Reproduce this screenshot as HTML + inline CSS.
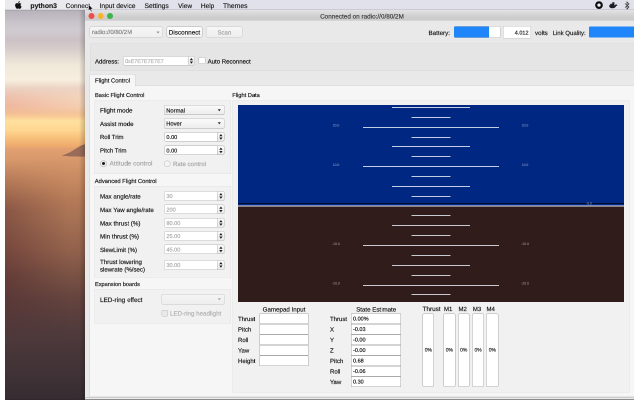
<!DOCTYPE html>
<html><head><meta charset="utf-8"><title>cfclient</title>
<style>
html,body{margin:0;padding:0;background:#fff;}
body{width:640px;height:400px;overflow:hidden;position:relative;font-family:"Liberation Sans", sans-serif;}
#s{position:absolute;left:0;top:0;width:1280px;height:800px;overflow:hidden;background:#fff;
transform:scale(0.5);transform-origin:0 0;will-change:transform;text-rendering:geometricPrecision;}
#s div,#s span,#s svg{position:absolute;box-sizing:border-box;display:block;white-space:nowrap;}
</style></head><body><div id="s">
<div style="left:10px;top:0px;width:1258px;height:800px;background:linear-gradient(to bottom,rgb(182,177,186) 0px,rgb(182,177,186) 20px,rgb(200,195,202) 44px,rgb(208,203,208) 60px,rgb(204,194,198) 80px,rgb(212,203,202) 96px,rgb(226,218,210) 112px,rgb(240,232,218) 130px,rgb(247,238,222) 160px,rgb(236,212,196) 176px,rgb(238,205,185) 190px,rgb(240,194,166) 210px,rgb(243,192,150) 226px,rgb(250,206,150) 234px,rgb(255,224,158) 242px,rgb(254,215,145) 260px,rgb(248,192,122) 276px,rgb(238,170,108) 292px,rgb(226,160,113) 298px,rgb(210,148,104) 330px,rgb(190,130,92) 380px,rgb(180,122,88) 400px,rgb(162,110,82) 450px,rgb(146,97,76) 500px,rgb(122,82,68) 550px,rgb(99,67,62) 600px,rgb(84,60,60) 650px,rgb(72,54,57) 700px,rgb(63,50,54) 750px,rgb(54,44,49) 796px,rgb(48,40,46) 800px);"></div>
<div style="left:10px;top:320px;width:160px;height:360px;background:linear-gradient(to right,rgba(45,5,25,0.27),rgba(45,5,25,0) 78%);-webkit-mask-image:linear-gradient(to bottom,transparent,#000 28%,#000 65%,transparent);mask-image:linear-gradient(to bottom,transparent,#000 28%,#000 65%,transparent);"></div>
<div style="left:10px;top:172px;width:160px;height:60px;background:linear-gradient(to right,rgba(236,150,140,0.22),rgba(255,240,210,0.30));-webkit-mask-image:linear-gradient(to bottom,transparent,#000 40%,#000 70%,transparent);mask-image:linear-gradient(to bottom,transparent,#000 40%,#000 70%,transparent);"></div>
<svg style="left:110px;top:276px;width:64px;height:48px" viewBox="0 0 32 24"><path d="M6.500 17.600 Q14 15.500 21 10.500 Q26 7 31 6 L31 18.500 Q18 19 6.500 17.600Z" fill="rgb(152,108,88)"/></svg>
<div style="left:158px;top:20px;width:12px;height:780px;background:linear-gradient(to right,rgba(0,0,0,0),rgba(0,0,0,0.2));"></div>
<div style="left:10px;top:0px;width:1258px;height:20px;background:linear-gradient(to right,#ebebee 0px,#e9e9ee 190px,#e1e1ec 300px);"></div>
<div style="left:10px;top:19.2px;width:160px;height:1.6px;background:rgba(120,120,130,0.35);"></div>
<svg style="left:30px;top:2px;width:14px;height:16px" viewBox="0 0 14 16"><path d="M9.6 0.2c0.1 1-0.3 1.9-0.9 2.6C8.1 3.500 7.200 4 6.300 3.900 6.200 3 6.600 2 7.200 1.400 7.800 0.700 8.800 0.200 9.600 0.200zM12.800 5.500c-1 0.600-1.600 1.500-1.600 2.700 0 1.400 0.800 2.500 2 3-0.300 1-0.800 1.900-1.400 2.700-0.700 0.900-1.300 1.800-2.400 1.800-1 0-1.300-0.600-2.500-0.600s-1.600 0.600-2.500 0.600c-1 0-1.700-0.900-2.400-1.900C0.700 11.900 0 9.500 0.300 7.600c0.300-1.900 1.800-3.300 3.500-3.300 1 0 1.900 0.700 2.500 0.700 0.600 0 1.700-0.800 2.900-0.700 1.400 0.100 2.600 0.600 3.600 1.200z" fill="#111"/></svg>
<span style="left:60.8px;top:1.66px;font-size:13.68px;line-height:20px;-webkit-text-stroke:0.32px #1c1c1c;color:#1c1c1c;font-weight:bold;">python3</span>
<span style="left:131.2px;top:1.68px;font-size:13.1px;line-height:20px;-webkit-text-stroke:0.32px #1c1c1c;color:#1c1c1c;">Connect</span>
<span style="left:199px;top:1.66px;font-size:13.36px;line-height:20px;-webkit-text-stroke:0.32px #1c1c1c;color:#1c1c1c;">Input device</span>
<span style="left:289px;top:1.66px;font-size:13.42px;line-height:20px;-webkit-text-stroke:0.32px #1c1c1c;color:#1c1c1c;">Settings</span>
<span style="left:356.2px;top:1.68px;font-size:12.94px;line-height:20px;-webkit-text-stroke:0.32px #1c1c1c;color:#1c1c1c;">View</span>
<span style="left:401.8px;top:1.68px;font-size:13.04px;line-height:20px;-webkit-text-stroke:0.32px #1c1c1c;color:#1c1c1c;">Help</span>
<span style="left:446px;top:1.66px;font-size:13.56px;line-height:20px;-webkit-text-stroke:0.32px #1c1c1c;color:#1c1c1c;">Themes</span>
<svg style="left:1188px;top:1.2px;width:20px;height:18px" viewBox="0 0 10 9"><circle cx="5" cy="4.6" r="2.75" fill="#f4f4f8" stroke="#0c0c10" stroke-width="2.2"/></svg>
<svg style="left:1216px;top:2px;width:22px;height:18px" viewBox="0 0 11 9"><path d="M1 4.200 H7.300 Q7.600 2.900 8.300 3 Q8.600 3.500 8.500 4 Q9.200 3.800 9.500 4.100 Q9 5 8.200 5 Q7.200 7.300 4.200 7.300 Q1.300 7.300 1 4.200Z M2.200 2.700h4.200v1.600H2.200z M4.300 1.300h2.100v1.500H4.300z" fill="#1c1c22"/></svg>
<svg style="left:1246px;top:2px;width:16px;height:18px" viewBox="0 0 8 9"><path d="M2 2.500 L6 6 L4 8 V1 L6 3 L2 6.500" fill="none" stroke="#333" stroke-width="0.7"/></svg>
<div style="left:170px;top:21px;width:1098px;height:779px;background:#e9e9e9;"></div>
<div style="left:170px;top:19.2px;width:1098px;height:1.8px;background:#b2b2be;"></div>
<div style="left:170px;top:20.4px;width:1098px;height:20.4px;background:linear-gradient(#e3e3e5,#d0d0d0 60%,#cbcbcb);border-bottom:1px solid #c0c0c0;"></div>
<div style="left:177.4px;top:26px;width:11.6px;height:11.6px;background:#ee4d48;border-radius:50%;"></div>
<div style="left:195.8px;top:26px;width:11.6px;height:11.6px;background:#f6b42d;border-radius:50%;"></div>
<div style="left:214.2px;top:26px;width:11.6px;height:11.6px;background:#3bb54a;border-radius:50%;"></div>
<span style="left:640.2px;top:23.3px;font-size:12.72px;line-height:20px;-webkit-text-stroke:0.32px #3a3a3a;color:#3a3a3a;">Connected on radio://0/80/2M</span>
<svg style="left:176px;top:8px;width:12px;height:18px" viewBox="0 0 6 9"><path d="M0.500 0.300 L0.500 6.800 L2 5.400 L3 7.800 L4 7.400 L3 5 L5 5 Z" fill="#111" stroke="#fff" stroke-width="0.4"/></svg>
<div style="left:179px;top:53px;width:146.8px;height:22.2px;background:linear-gradient(#f6f6f6,#efefef);border:1.4px solid #c4c4c4;border-radius:3.6px;"></div>
<span style="left:184px;top:54.12px;font-size:12px;line-height:20px;-webkit-text-stroke:0.32px #7e7e7e;color:#7e7e7e;">radio://0/80/2M</span>
<svg style="left:312px;top:62px;width:8px;height:6px" viewBox="0 0 4 3"><path d="M0.300 0.500 L3.700 0.500 L2 2.600Z" fill="#999"/></svg>
<div style="left:332.6px;top:52.8px;width:72.2px;height:22.6px;background:linear-gradient(#ffffff,#f4f4f4);border:1.4px solid #adadad;border-radius:3.6px;"></div>
<span style="left:337.6px;top:55.3px;font-size:12.7px;line-height:20px;-webkit-text-stroke:0.32px #111;color:#111;">Disconnect</span>
<div style="left:412.4px;top:52.8px;width:72.2px;height:22.6px;background:linear-gradient(#f6f6f6,#eeeeee);border:1.4px solid #cbcbcb;border-radius:3.6px;"></div>
<span style="left:435.1px;top:55.32px;font-size:12.02px;line-height:20px;-webkit-text-stroke:0.32px #a2a2a2;color:#a2a2a2;">Scan</span>
<span style="left:857px;top:55.5px;font-size:12.48px;line-height:20px;-webkit-text-stroke:0.32px #1a1a1a;color:#1a1a1a;">Battery:</span>
<div style="left:907.6px;top:52.2px;width:93px;height:23.6px;background:#fff;border:1.2px solid #b8b8b8;border-radius:2.4px;"></div>
<div style="left:908.4px;top:53px;width:70px;height:22px;background:#1e86f8;border-radius:2px 0 0 2px;"></div>
<div style="left:1006.4px;top:51.6px;width:55.2px;height:25.6px;background:#fff;border:1.2px solid #c4c4c4;"></div>
<span style="left:1029.6px;top:55.76px;font-size:10.94px;line-height:20px;-webkit-text-stroke:0.32px #222;color:#222;">4.012</span>
<span style="left:1070px;top:55.5px;font-size:12.44px;line-height:20px;-webkit-text-stroke:0.32px #1a1a1a;color:#1a1a1a;">volts</span>
<span style="left:1105.2px;top:55.52px;font-size:12.04px;line-height:20px;-webkit-text-stroke:0.32px #1a1a1a;color:#1a1a1a;">Link Quality:</span>
<div style="left:1178px;top:52.6px;width:90px;height:22.8px;background:#1e86f8;border-radius:2px 0 0 2px;"></div>
<div style="left:180px;top:87.2px;width:1088px;height:55px;background:#e5e5e5;border-top:1.2px solid #d8d8d8;border-bottom:1.2px solid #d8d8d8;border-left:1.2px solid #d8d8d8;"></div>
<span style="left:190px;top:112.92px;font-size:12.16px;line-height:20px;-webkit-text-stroke:0.32px #111;color:#111;">Address:</span>
<div style="left:245.6px;top:112px;width:131.2px;height:19.4px;background:#fff;border:1.4px solid #b4b4b4;border-radius:3.6px 0 0 3.6px;"></div>
<span style="left:250px;top:112.96px;font-size:10.8px;line-height:20px;-webkit-text-stroke:0.32px #b4b4b4;color:#b4b4b4;">0xE7E7E7E7E7</span>
<div style="left:375.6px;top:112px;width:14.4px;height:19.4px;background:linear-gradient(#fbfbfb,#e9e9e9);border:1.4px solid #b9b9b9;border-radius:0 3.6px 3.6px 0;"></div>
<svg style="left:379.2px;top:114.9px;width:7.6px;height:13.6px" viewBox="0 0 3.4 6.6"><path d="M0.100 2.700 L1.700 0.500 L3.300 2.700Z M0.100 3.900 L1.700 6.100 L3.300 3.900Z" fill="#1c1c1c"/></svg>
<div style="left:396.8px;top:114.4px;width:13.8px;height:13.8px;background:#fff;border:1.4px solid #b0b0b0;border-radius:2.4px;"></div>
<span style="left:415.2px;top:112.92px;font-size:12.14px;line-height:20px;-webkit-text-stroke:0.32px #111;color:#111;">Auto Reconnect</span>
<div style="left:178.6px;top:171.4px;width:1089.4px;height:622.2px;background:#f6f6f6;border:1.4px solid #d2d2d2;border-right:none;"></div>
<div style="left:179px;top:148.2px;width:92px;height:24.6px;background:#f6f6f6;border:1.4px solid #d2d2d2;border-bottom:none;border-radius:3px 3px 0 0;"></div>
<span style="left:190px;top:151.92px;font-size:11.78px;line-height:20px;-webkit-text-stroke:0.32px #111;color:#111;">Flight Control</span>
<span style="left:190px;top:180.54px;font-size:11.42px;line-height:20px;-webkit-text-stroke:0.32px #141414;color:#141414;">Basic Flight Control</span>
<div style="left:189px;top:200.6px;width:273px;height:147.4px;background:#f1f1f1;border:1.2px solid #e2e2e2;"></div>
<span style="left:200px;top:211.3px;font-size:12.44px;line-height:20px;-webkit-text-stroke:0.32px #141414;color:#141414;">Flight mode</span>
<div style="left:327.5px;top:210.4px;width:121.5px;height:19.8px;background:linear-gradient(#fafafa,#ececec);border:1.2px solid #c0c0c0;border-bottom-color:#a8a8a8;border-radius:3px;"></div>
<svg style="left:435px;top:217.9px;width:7.2px;height:5.2px" viewBox="0 0 3.600 2.600"><path d="M0.200 0.300 L3.400 0.300 L1.800 2.400Z" fill="#333"/></svg>
<span style="left:332.5px;top:211.64px;font-size:11.6px;line-height:20px;-webkit-text-stroke:0.32px #111;color:#111;">Normal</span>
<span style="left:200px;top:237.7px;font-size:12.3px;line-height:20px;-webkit-text-stroke:0.32px #141414;color:#141414;">Assist mode</span>
<div style="left:327.5px;top:236.8px;width:121.5px;height:20px;background:linear-gradient(#fafafa,#ececec);border:1.2px solid #c0c0c0;border-bottom-color:#a8a8a8;border-radius:3px;"></div>
<svg style="left:435px;top:244.4px;width:7.2px;height:5.2px" viewBox="0 0 3.600 2.600"><path d="M0.200 0.300 L3.400 0.300 L1.800 2.400Z" fill="#333"/></svg>
<span style="left:332.5px;top:238.14px;font-size:11.6px;line-height:20px;-webkit-text-stroke:0.32px #111;color:#111;">Hover</span>
<span style="left:200px;top:264.32px;font-size:11.92px;line-height:20px;-webkit-text-stroke:0.32px #141414;color:#141414;">Roll Trim</span>
<div style="left:327.8px;top:264px;width:107.8px;height:19.2px;background:#fff;border:1.4px solid #adadad;border-radius:3.6px 0 0 3.6px;"></div>
<div style="left:434.4px;top:264px;width:14.4px;height:19.2px;background:linear-gradient(#fbfbfb,#e9e9e9);border:1.4px solid #adadad;border-radius:0 3.6px 3.6px 0;"></div>
<svg style="left:438px;top:266.8px;width:7.6px;height:13.6px" viewBox="0 0 3.4 6.6"><path d="M0.100 2.700 L1.700 0.500 L3.300 2.700Z M0.100 3.900 L1.700 6.100 L3.300 3.900Z" fill="#1c1c1c"/></svg>
<span style="left:332.8px;top:264.96px;font-size:11.2px;line-height:20px;-webkit-text-stroke:0.32px #111;color:#111;">0.00</span>
<span style="left:200px;top:290.92px;font-size:11.92px;line-height:20px;-webkit-text-stroke:0.32px #141414;color:#141414;">Pitch Trim</span>
<div style="left:327.8px;top:291px;width:107.8px;height:19.4px;background:#fff;border:1.4px solid #adadad;border-radius:3.6px 0 0 3.6px;"></div>
<div style="left:434.4px;top:291px;width:14.4px;height:19.4px;background:linear-gradient(#fbfbfb,#e9e9e9);border:1.4px solid #adadad;border-radius:0 3.6px 3.6px 0;"></div>
<svg style="left:438px;top:293.9px;width:7.6px;height:13.6px" viewBox="0 0 3.4 6.6"><path d="M0.100 2.700 L1.700 0.500 L3.300 2.700Z M0.100 3.900 L1.700 6.100 L3.300 3.900Z" fill="#1c1c1c"/></svg>
<span style="left:332.8px;top:292.06px;font-size:11.2px;line-height:20px;-webkit-text-stroke:0.32px #111;color:#111;">0.00</span>
<div style="left:200.4px;top:320.6px;width:13.2px;height:13.2px;background:#ededed;border:1.4px solid #a4a4a4;border-radius:50%;"></div>
<div style="left:204px;top:324.2px;width:6px;height:6px;background:#1c1c1c;border-radius:50%;"></div>
<span style="left:219px;top:317.48px;font-size:12.9px;line-height:20px;-webkit-text-stroke:0.32px #a6a6a6;color:#a6a6a6;">Attitude control</span>
<div style="left:327.8px;top:320.6px;width:13.2px;height:13.2px;background:#f4f4f4;border:1.4px solid #b4b4b4;border-radius:50%;"></div>
<span style="left:346px;top:317.52px;font-size:12.24px;line-height:20px;-webkit-text-stroke:0.32px #a6a6a6;color:#a6a6a6;">Rate control</span>
<span style="left:189.6px;top:352.54px;font-size:11.58px;line-height:20px;-webkit-text-stroke:0.32px #141414;color:#141414;">Advanced Flight Control</span>
<div style="left:189px;top:372px;width:273px;height:183px;background:#f1f1f1;border:1.2px solid #e2e2e2;"></div>
<span style="left:200px;top:383px;font-size:12.32px;line-height:20px;-webkit-text-stroke:0.32px #141414;color:#141414;">Max angle/rate</span>
<div style="left:327.8px;top:382.2px;width:107.8px;height:19.4px;background:#fff;border:1.4px solid #b8b8b8;border-radius:3.6px 0 0 3.6px;"></div>
<div style="left:434.4px;top:382.2px;width:14.4px;height:19.4px;background:linear-gradient(#fbfbfb,#e9e9e9);border:1.4px solid #b8b8b8;border-radius:0 3.6px 3.6px 0;"></div>
<svg style="left:438px;top:385.1px;width:7.6px;height:13.6px" viewBox="0 0 3.4 6.6"><path d="M0.100 2.700 L1.700 0.500 L3.300 2.700Z M0.100 3.900 L1.700 6.100 L3.300 3.900Z" fill="#1c1c1c"/></svg>
<span style="left:332.8px;top:383.26px;font-size:11.2px;line-height:20px;-webkit-text-stroke:0.32px #a8a8a8;color:#a8a8a8;">30</span>
<span style="left:200px;top:409.7px;font-size:12.3px;line-height:20px;-webkit-text-stroke:0.32px #141414;color:#141414;">Max Yaw angle/rate</span>
<div style="left:327.8px;top:408.9px;width:107.8px;height:19.4px;background:#fff;border:1.4px solid #b8b8b8;border-radius:3.6px 0 0 3.6px;"></div>
<div style="left:434.4px;top:408.9px;width:14.4px;height:19.4px;background:linear-gradient(#fbfbfb,#e9e9e9);border:1.4px solid #b8b8b8;border-radius:0 3.6px 3.6px 0;"></div>
<svg style="left:438px;top:411.8px;width:7.6px;height:13.6px" viewBox="0 0 3.4 6.6"><path d="M0.100 2.700 L1.700 0.500 L3.300 2.700Z M0.100 3.900 L1.700 6.100 L3.300 3.900Z" fill="#1c1c1c"/></svg>
<span style="left:332.8px;top:409.96px;font-size:11.2px;line-height:20px;-webkit-text-stroke:0.32px #a8a8a8;color:#a8a8a8;">200</span>
<span style="left:200px;top:436.5px;font-size:12.46px;line-height:20px;-webkit-text-stroke:0.32px #141414;color:#141414;">Max thrust (%)</span>
<div style="left:327.8px;top:435.7px;width:107.8px;height:19.4px;background:#fff;border:1.4px solid #b8b8b8;border-radius:3.6px 0 0 3.6px;"></div>
<div style="left:434.4px;top:435.7px;width:14.4px;height:19.4px;background:linear-gradient(#fbfbfb,#e9e9e9);border:1.4px solid #b8b8b8;border-radius:0 3.6px 3.6px 0;"></div>
<svg style="left:438px;top:438.6px;width:7.6px;height:13.6px" viewBox="0 0 3.4 6.6"><path d="M0.100 2.700 L1.700 0.500 L3.300 2.700Z M0.100 3.900 L1.700 6.100 L3.300 3.900Z" fill="#1c1c1c"/></svg>
<span style="left:332.8px;top:436.76px;font-size:11.2px;line-height:20px;-webkit-text-stroke:0.32px #a8a8a8;color:#a8a8a8;">80.00</span>
<span style="left:200px;top:463.1px;font-size:12.54px;line-height:20px;-webkit-text-stroke:0.32px #141414;color:#141414;">Min thrust (%)</span>
<div style="left:327.8px;top:462.3px;width:107.8px;height:19.4px;background:#fff;border:1.4px solid #b8b8b8;border-radius:3.6px 0 0 3.6px;"></div>
<div style="left:434.4px;top:462.3px;width:14.4px;height:19.4px;background:linear-gradient(#fbfbfb,#e9e9e9);border:1.4px solid #b8b8b8;border-radius:0 3.6px 3.6px 0;"></div>
<svg style="left:438px;top:465.2px;width:7.6px;height:13.6px" viewBox="0 0 3.4 6.6"><path d="M0.100 2.700 L1.700 0.500 L3.300 2.700Z M0.100 3.900 L1.700 6.100 L3.300 3.900Z" fill="#1c1c1c"/></svg>
<span style="left:332.8px;top:463.36px;font-size:11.2px;line-height:20px;-webkit-text-stroke:0.32px #a8a8a8;color:#a8a8a8;">25.00</span>
<span style="left:200px;top:489.52px;font-size:12.1px;line-height:20px;-webkit-text-stroke:0.32px #141414;color:#141414;">SlewLimit (%)</span>
<div style="left:327.8px;top:488.7px;width:107.8px;height:19.4px;background:#fff;border:1.4px solid #b8b8b8;border-radius:3.6px 0 0 3.6px;"></div>
<div style="left:434.4px;top:488.7px;width:14.4px;height:19.4px;background:linear-gradient(#fbfbfb,#e9e9e9);border:1.4px solid #b8b8b8;border-radius:0 3.6px 3.6px 0;"></div>
<svg style="left:438px;top:491.6px;width:7.6px;height:13.6px" viewBox="0 0 3.4 6.6"><path d="M0.100 2.700 L1.700 0.500 L3.300 2.700Z M0.100 3.900 L1.700 6.100 L3.300 3.900Z" fill="#1c1c1c"/></svg>
<span style="left:332.8px;top:489.76px;font-size:11.2px;line-height:20px;-webkit-text-stroke:0.32px #a8a8a8;color:#a8a8a8;">45.00</span>
<span style="left:200px;top:514px;font-size:12.28px;line-height:20px;-webkit-text-stroke:0.32px #141414;color:#141414;">Thrust lowering</span>
<span style="left:200px;top:529.02px;font-size:12.18px;line-height:20px;-webkit-text-stroke:0.32px #141414;color:#141414;">slewrate (%/sec)</span>
<div style="left:327.8px;top:520.4px;width:107.8px;height:19.4px;background:#fff;border:1.4px solid #b8b8b8;border-radius:3.6px 0 0 3.6px;"></div>
<div style="left:434.4px;top:520.4px;width:14.4px;height:19.4px;background:linear-gradient(#fbfbfb,#e9e9e9);border:1.4px solid #b8b8b8;border-radius:0 3.6px 3.6px 0;"></div>
<svg style="left:438px;top:523.3px;width:7.6px;height:13.6px" viewBox="0 0 3.4 6.6"><path d="M0.100 2.700 L1.700 0.500 L3.300 2.700Z M0.100 3.900 L1.700 6.100 L3.300 3.900Z" fill="#1c1c1c"/></svg>
<span style="left:332.8px;top:521.46px;font-size:11.2px;line-height:20px;-webkit-text-stroke:0.32px #a8a8a8;color:#a8a8a8;">30.00</span>
<span style="left:190px;top:559.06px;font-size:11.24px;line-height:20px;-webkit-text-stroke:0.32px #141414;color:#141414;">Expansion boards</span>
<div style="left:189px;top:578.4px;width:273px;height:68.4px;background:#f1f1f1;border:1.2px solid #e2e2e2;"></div>
<span style="left:200px;top:590.48px;font-size:12.78px;line-height:20px;-webkit-text-stroke:0.32px #141414;color:#141414;">LED-ring effect</span>
<div style="left:322.6px;top:588.4px;width:126.4px;height:20.4px;background:linear-gradient(#f4f4f4,#eeeeee);border:1.2px solid #cacaca;border-bottom-color:#c2c2c2;border-radius:3px;"></div>
<svg style="left:435px;top:596.2px;width:7.2px;height:5.2px" viewBox="0 0 3.600 2.600"><path d="M0.200 0.300 L3.400 0.300 L1.800 2.400Z" fill="#aaa"/></svg>
<div style="left:322.8px;top:619.8px;width:12.8px;height:12.8px;background:#e8e8e8;border:1.4px solid #bcbcbc;border-radius:2.4px;"></div>
<span style="left:340px;top:616.5px;font-size:12.38px;line-height:20px;-webkit-text-stroke:0.32px #b0b0b0;color:#b0b0b0;">LED-ring headlight</span>
<span style="left:464.6px;top:180.54px;font-size:11.38px;line-height:20px;-webkit-text-stroke:0.32px #141414;color:#141414;">Flight Data</span>
<div style="left:464.6px;top:200.6px;width:794.2px;height:584px;background:#f1f1f1;border:1.2px solid #e2e2e2;"></div>
<div style="left:475.6px;top:209.6px;width:772.6px;height:202.6px;background:#002883;"></div>
<div style="left:475.6px;top:412.2px;width:772.6px;height:191.4px;background:#301c1b;"></div>
<div style="left:822.9px;top:392px;width:78px;height:2px;background:rgba(236,240,250,0.82);"></div>
<div style="left:822.9px;top:430px;width:78px;height:2px;background:rgba(236,240,250,0.82);"></div>
<div style="left:783.9px;top:372px;width:156px;height:2px;background:rgba(236,240,250,0.82);"></div>
<div style="left:783.9px;top:450px;width:156px;height:2px;background:rgba(236,240,250,0.82);"></div>
<div style="left:822.9px;top:352px;width:78px;height:2px;background:rgba(236,240,250,0.82);"></div>
<div style="left:822.9px;top:470px;width:78px;height:2px;background:rgba(236,240,250,0.82);"></div>
<div style="left:725.9px;top:332px;width:272px;height:2px;background:rgba(236,240,250,0.82);"></div>
<span style="left:665.38px;top:321.36px;font-size:6.8px;line-height:20px;color:rgba(225,230,245,0.62);">10.0</span>
<span style="left:1043.38px;top:321.36px;font-size:6.8px;line-height:20px;color:rgba(225,230,245,0.62);">10.0</span>
<div style="left:725.9px;top:490px;width:272px;height:2px;background:rgba(236,240,250,0.82);"></div>
<span style="left:664.26px;top:479.28px;font-size:6.8px;line-height:20px;color:rgba(225,230,245,0.62);">-10.0</span>
<span style="left:1042.26px;top:479.28px;font-size:6.8px;line-height:20px;color:rgba(225,230,245,0.62);">-10.0</span>
<div style="left:822.9px;top:312px;width:78px;height:2px;background:rgba(236,240,250,0.82);"></div>
<div style="left:822.9px;top:510px;width:78px;height:2px;background:rgba(236,240,250,0.82);"></div>
<div style="left:783.9px;top:292px;width:156px;height:2px;background:rgba(236,240,250,0.82);"></div>
<div style="left:783.9px;top:530px;width:156px;height:2px;background:rgba(236,240,250,0.82);"></div>
<div style="left:822.9px;top:274px;width:78px;height:2px;background:rgba(236,240,250,0.82);"></div>
<div style="left:822.9px;top:550px;width:78px;height:2px;background:rgba(236,240,250,0.82);"></div>
<div style="left:725.9px;top:254px;width:272px;height:2px;background:rgba(236,240,250,0.82);"></div>
<span style="left:665.38px;top:242.4px;font-size:6.8px;line-height:20px;color:rgba(225,230,245,0.62);">20.0</span>
<span style="left:1043.38px;top:242.4px;font-size:6.8px;line-height:20px;color:rgba(225,230,245,0.62);">20.0</span>
<div style="left:725.9px;top:570px;width:272px;height:2px;background:rgba(236,240,250,0.82);"></div>
<span style="left:664.26px;top:558.24px;font-size:6.8px;line-height:20px;color:rgba(225,230,245,0.62);">-20.0</span>
<span style="left:1042.26px;top:558.24px;font-size:6.8px;line-height:20px;color:rgba(225,230,245,0.62);">-20.0</span>
<div style="left:822.9px;top:234px;width:78px;height:2px;background:rgba(236,240,250,0.82);"></div>
<div style="left:822.9px;top:588px;width:78px;height:2px;background:rgba(236,240,250,0.82);"></div>
<div style="left:783.9px;top:214px;width:156px;height:2px;background:rgba(236,240,250,0.82);"></div>
<div style="left:475.6px;top:406px;width:772.6px;height:2px;background:#040c30;"></div>
<div style="left:475.6px;top:411px;width:772.6px;height:2.4px;background:#ececf2;"></div>
<span style="left:1172.48px;top:397.94px;font-size:6.4px;line-height:20px;color:rgba(225,228,240,0.7);">-0.0</span>
<span style="left:525.3px;top:608.5px;font-size:12.38px;line-height:20px;-webkit-text-stroke:0.32px #141414;color:#141414;">Gamepad Input</span>
<span style="left:476px;top:628.32px;font-size:12px;line-height:20px;-webkit-text-stroke:0.32px #141414;color:#141414;">Thrust</span>
<div style="left:518.6px;top:627px;width:98.8px;height:20.6px;background:#fff;border:1.4px solid #a9a9a9;"></div>
<span style="left:476px;top:649.32px;font-size:12px;line-height:20px;-webkit-text-stroke:0.32px #141414;color:#141414;">Pitch</span>
<div style="left:518.6px;top:648px;width:98.8px;height:20.6px;background:#fff;border:1.4px solid #a9a9a9;"></div>
<span style="left:476px;top:670.32px;font-size:12px;line-height:20px;-webkit-text-stroke:0.32px #141414;color:#141414;">Roll</span>
<div style="left:518.6px;top:669px;width:98.8px;height:20.6px;background:#fff;border:1.4px solid #a9a9a9;"></div>
<span style="left:476px;top:691.32px;font-size:12px;line-height:20px;-webkit-text-stroke:0.32px #141414;color:#141414;">Yaw</span>
<div style="left:518.6px;top:690px;width:98.8px;height:20.6px;background:#fff;border:1.4px solid #a9a9a9;"></div>
<span style="left:476px;top:712.32px;font-size:12px;line-height:20px;-webkit-text-stroke:0.32px #141414;color:#141414;">Height</span>
<div style="left:518.6px;top:711px;width:98.8px;height:20.6px;background:#fff;border:1.4px solid #a9a9a9;"></div>
<span style="left:712.4px;top:608.5px;font-size:12.3px;line-height:20px;-webkit-text-stroke:0.32px #141414;color:#141414;">State Estimate</span>
<span style="left:660px;top:628.32px;font-size:12px;line-height:20px;-webkit-text-stroke:0.32px #141414;color:#141414;">Thrust</span>
<div style="left:702.4px;top:627px;width:99.6px;height:20.6px;background:#fff;border:1.4px solid #a9a9a9;"></div>
<span style="left:706px;top:628.36px;font-size:11px;line-height:20px;-webkit-text-stroke:0.32px #111;color:#111;">0.00%</span>
<span style="left:660px;top:649.32px;font-size:12px;line-height:20px;-webkit-text-stroke:0.32px #141414;color:#141414;">X</span>
<div style="left:702.4px;top:648px;width:99.6px;height:20.6px;background:#fff;border:1.4px solid #a9a9a9;"></div>
<span style="left:706px;top:649.36px;font-size:11px;line-height:20px;-webkit-text-stroke:0.32px #111;color:#111;">-0.03</span>
<span style="left:660px;top:670.32px;font-size:12px;line-height:20px;-webkit-text-stroke:0.32px #141414;color:#141414;">Y</span>
<div style="left:702.4px;top:669px;width:99.6px;height:20.6px;background:#fff;border:1.4px solid #a9a9a9;"></div>
<span style="left:706px;top:670.36px;font-size:11px;line-height:20px;-webkit-text-stroke:0.32px #111;color:#111;">-0.00</span>
<span style="left:660px;top:691.32px;font-size:12px;line-height:20px;-webkit-text-stroke:0.32px #141414;color:#141414;">Z</span>
<div style="left:702.4px;top:690px;width:99.6px;height:20.6px;background:#fff;border:1.4px solid #a9a9a9;"></div>
<span style="left:706px;top:691.36px;font-size:11px;line-height:20px;-webkit-text-stroke:0.32px #111;color:#111;">-0.00</span>
<span style="left:660px;top:712.32px;font-size:12px;line-height:20px;-webkit-text-stroke:0.32px #141414;color:#141414;">Pitch</span>
<div style="left:702.4px;top:711px;width:99.6px;height:20.6px;background:#fff;border:1.4px solid #a9a9a9;"></div>
<span style="left:706px;top:712.36px;font-size:11px;line-height:20px;-webkit-text-stroke:0.32px #111;color:#111;">0.68</span>
<span style="left:660px;top:733.32px;font-size:12px;line-height:20px;-webkit-text-stroke:0.32px #141414;color:#141414;">Roll</span>
<div style="left:702.4px;top:732px;width:99.6px;height:20.6px;background:#fff;border:1.4px solid #a9a9a9;"></div>
<span style="left:706px;top:733.36px;font-size:11px;line-height:20px;-webkit-text-stroke:0.32px #111;color:#111;">-0.06</span>
<span style="left:660px;top:754.32px;font-size:12px;line-height:20px;-webkit-text-stroke:0.32px #141414;color:#141414;">Yaw</span>
<div style="left:702.4px;top:753px;width:99.6px;height:20.6px;background:#fff;border:1.4px solid #a9a9a9;"></div>
<span style="left:706px;top:754.36px;font-size:11px;line-height:20px;-webkit-text-stroke:0.32px #111;color:#111;">0.30</span>
<span style="left:845.2px;top:607.9px;font-size:12.64px;line-height:20px;-webkit-text-stroke:0.32px #141414;color:#141414;">Thrust</span>
<span style="left:888px;top:607.92px;font-size:12px;line-height:20px;-webkit-text-stroke:0.32px #141414;color:#141414;">M1</span>
<span style="left:917px;top:607.92px;font-size:12px;line-height:20px;-webkit-text-stroke:0.32px #141414;color:#141414;">M2</span>
<span style="left:945.8px;top:607.92px;font-size:12px;line-height:20px;-webkit-text-stroke:0.32px #141414;color:#141414;">M3</span>
<span style="left:973px;top:607.92px;font-size:12px;line-height:20px;-webkit-text-stroke:0.32px #141414;color:#141414;">M4</span>
<div style="left:845.2px;top:626.8px;width:22.8px;height:147.2px;background:#fff;border:1.4px solid #a8a8a8;border-radius:3px;"></div>
<span style="left:849.38px;top:691.4px;font-size:10px;line-height:20px;-webkit-text-stroke:0.32px #222;color:#222;">0%</span>
<div style="left:886.8px;top:626.8px;width:23.8px;height:147.2px;background:#fff;border:1.4px solid #a8a8a8;border-radius:3px;"></div>
<span style="left:891.48px;top:691.4px;font-size:10px;line-height:20px;-webkit-text-stroke:0.32px #222;color:#222;">0%</span>
<div style="left:915.6px;top:626.8px;width:23.6px;height:147.2px;background:#fff;border:1.4px solid #a8a8a8;border-radius:3px;"></div>
<span style="left:920.18px;top:691.4px;font-size:10px;line-height:20px;-webkit-text-stroke:0.32px #222;color:#222;">0%</span>
<div style="left:944.4px;top:626.8px;width:23.6px;height:147.2px;background:#fff;border:1.4px solid #a8a8a8;border-radius:3px;"></div>
<span style="left:948.98px;top:691.4px;font-size:10px;line-height:20px;-webkit-text-stroke:0.32px #222;color:#222;">0%</span>
<div style="left:972.4px;top:626.8px;width:24.4px;height:147.2px;background:#fff;border:1.4px solid #a8a8a8;border-radius:3px;"></div>
<span style="left:977.38px;top:691.4px;font-size:10px;line-height:20px;-webkit-text-stroke:0.32px #222;color:#222;">0%</span>
<div style="left:170px;top:794px;width:1098px;height:2px;background:#cdcdcd;"></div>
<div style="left:170px;top:796px;width:1098px;height:2px;background:#e9e9e9;"></div>
<div style="left:170px;top:798px;width:1098px;height:2px;background:#8c8c8c;"></div>
</div></body></html>
